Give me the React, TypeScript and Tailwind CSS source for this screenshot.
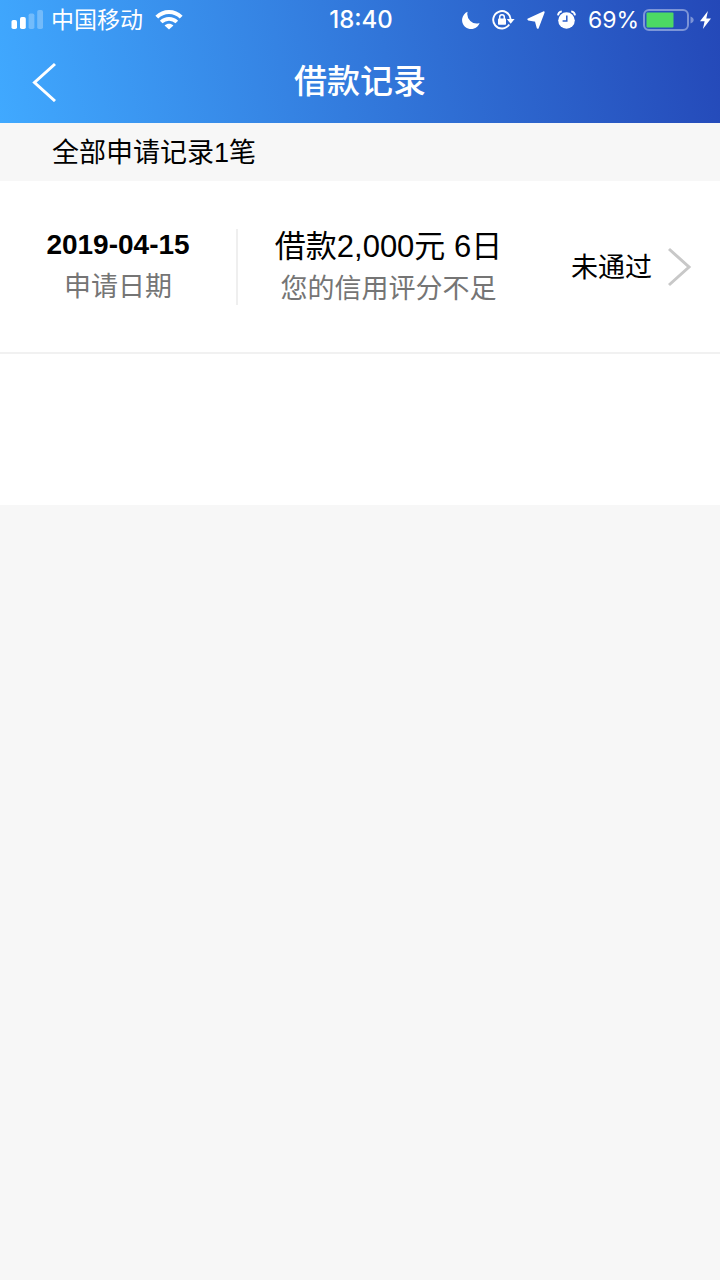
import type { ReactNode } from 'react';

type LoanRecord = {
	date: string;
	title: string;
	reason: string;
	status: string;
};

const records: LoanRecord[] = [
	{
		date: '2019-04-15',
		title: '借款2,000元 6日',
		reason: '您的信用评分不足',
		status: '未通过',
	},
];

const Icon = ({
	className,
	viewBox,
	children,
}: {
	className: string;
	viewBox: string;
	children: ReactNode;
}) => (
	<svg className={`shrink-0 ${className}`} viewBox={viewBox} fill="none" aria-hidden="true">
		{children}
	</svg>
);

const SignalIcon = () => (
	<Icon className="w-8 h-5" viewBox="0 0 32 20">
		<rect x="0.5" y="10" width="5.5" height="9" rx="1.8" fill="white" />
		<rect x="9" y="7" width="5.8" height="12" rx="1.8" fill="white" />
		<rect x="17.6" y="3.5" width="5.8" height="15.5" rx="1.8" fill="white" fillOpacity=".28" />
		<rect x="26.2" y="0" width="5.8" height="19" rx="1.8" fill="white" fillOpacity=".28" />
	</Icon>
);

const WifiIcon = () => (
	<Icon className="w-7 h-5" viewBox="0 0 28 20">
		<path d="M1.8 7.2C8.6.4 19.4.4 26.2 7.2" stroke="white" strokeWidth="4" />
		<path d="M6.2 12c4.4-4.2 11.2-4.2 15.6 0" stroke="white" strokeWidth="3.8" />
		<path d="M14 19.6l-4.4-4.2c2.5-2.3 6.3-2.3 8.8 0z" fill="white" />
	</Icon>
);

const MoonIcon = () => (
	<Icon className="w-[18px] h-[18px]" viewBox="0 0 18 18">
		<path d="M5.6.8A9 9 0 1 0 17.6 12A9.4 9.4 0 0 1 5.6.8z" fill="white" />
	</Icon>
);

const RotationLockIcon = () => (
	<Icon className="w-[23px] h-5" viewBox="0 0 23 20">
		<path d="M17.2 14.6A8.7 8.7 0 1 1 18.6 9" stroke="white" strokeWidth="1.9" />
		<path d="M14.8 9h7.8l-3.9 4.8z" fill="white" />
		<rect x="6" y="8.6" width="8" height="6.2" rx=".8" fill="white" />
		<path d="M7.7 9V7a2.3 2.3 0 0 1 4.6 0v2" stroke="white" strokeWidth="1.5" />
	</Icon>
);

const LocationIcon = () => (
	<Icon className="w-[18px] h-[18px]" viewBox="0 0 18 18">
		<path
			d="M16.6 1.3L1.4 8.4l7.4 1.4 1.9 7z"
			fill="white"
			stroke="white"
			strokeWidth="2"
			strokeLinejoin="round"
		/>
	</Icon>
);

const AlarmIcon = () => (
	<Icon className="w-[19px] h-5" viewBox="0 0 19 20">
		<circle cx="9.5" cy="10.5" r="8.3" fill="white" />
		<path d="M9.8 5.6v5.5H5.6" stroke="#2c5fca" strokeWidth="1.5" />
		<path
			d="M1 5.4C1.2 3.2 2.6 1.7 4.8 1.4M18 5.4c-.2-2.2-1.6-3.7-3.8-4"
			stroke="white"
			strokeWidth="1.9"
		/>
	</Icon>
);

const BatteryIcon = () => (
	<Icon className="w-[51px] h-[22px]" viewBox="0 0 51 22">
		<rect x="1" y="1" width="44" height="20" rx="5" stroke="white" strokeOpacity=".4" strokeWidth="2" />
		<path d="M47.5 7.5c2.2.8 3.2 2 3.2 3.5s-1 2.7-3.2 3.5z" fill="white" fillOpacity=".4" />
		<rect x="3.5" y="3.5" width="27" height="15" rx="1" fill="#4cd964" />
	</Icon>
);

const BoltIcon = () => (
	<Icon className="w-[11px] h-[18px]" viewBox="0 0 11 18">
		<path d="M7.9 0L0 10.3h4.6L2.9 18 11 7.4H6.3z" fill="white" />
	</Icon>
);

const StatusBar = () => (
	<div className="grid grid-cols-[1fr_auto_1fr] items-center h-10 pl-[11px] pr-[9px] text-white">
		<div className="flex items-center">
			<SignalIcon />
			<span className="ml-2 mr-3 text-[23px] leading-10">中国移动</span>
			<WifiIcon />
		</div>
		<time className="font-['Inter'] text-[24px] leading-10 font-medium">18:40</time>
		<div className="flex items-center justify-end">
			<div className="flex items-center gap-3 mr-3">
				<MoonIcon />
				<RotationLockIcon />
				<LocationIcon />
				<AlarmIcon />
			</div>
			<span className="mr-1 font-['Inter'] text-[23px] leading-10">69%</span>
			<BatteryIcon />
			<span className="ml-1.5">
				<BoltIcon />
			</span>
		</div>
	</div>
);

const TitleBar = () => (
	<div className="grid grid-cols-[1fr_auto_1fr] items-center h-[83px] px-8 text-white">
		<button type="button" aria-label="返回" className="justify-self-start">
			<Icon className="w-6 h-10" viewBox="0 0 24 40">
				<path d="M23 2L2.5 20.5 23 39" stroke="white" strokeWidth="3" />
			</Icon>
		</button>
		<h1 className="text-[33px] leading-10 font-medium">借款记录</h1>
	</div>
);

const RecordRow = ({ record }: { record: LoanRecord }) => (
	<li className="border-b-2 border-[#f1f1f1]">
		<button type="button" className="flex items-center w-full h-[171px] pr-7 text-center">
			<span className="flex flex-col shrink-0 items-center w-[238px] h-[76px] border-r-2 border-[#efefef]">
				<span className="text-[28px] leading-8 font-bold">{record.date}</span>
				<span className="mt-1 text-[27px] leading-11 text-[#757575]">申请日期</span>
			</span>
			<span className="flex flex-col items-center flex-1 pt-1">
				<span className="text-[31px] leading-10">{record.title}</span>
				<span className="text-[27px] leading-11 text-[#757575]">{record.reason}</span>
			</span>
			<span className="ml-8 pt-0.5 text-[27px] leading-10">{record.status}</span>
			<Icon className="w-6 h-10 ml-4" viewBox="0 0 24 40">
				<path d="M1 2l20 18L1 38" stroke="#c8c8c8" strokeWidth="3" />
			</Icon>
		</button>
	</li>
);

export default function App() {
	return (
		<main className="min-h-screen bg-[#f7f7f7] text-black font-['Liberation_Sans','Noto_Sans_CJK_SC',sans-serif]">
			<header className="bg-linear-[78deg,#40a9ff,#2448b8]">
				<StatusBar />
				<TitleBar />
			</header>
			<h2 className="pt-2.5 pb-2 px-[52px] text-[27px] leading-10">
				全部申请记录{records.length}笔
			</h2>
			<ul className="min-h-[324px] bg-white">
				{records.map((record) => (
					<RecordRow key={record.date} record={record} />
				))}
			</ul>
		</main>
	);
}
